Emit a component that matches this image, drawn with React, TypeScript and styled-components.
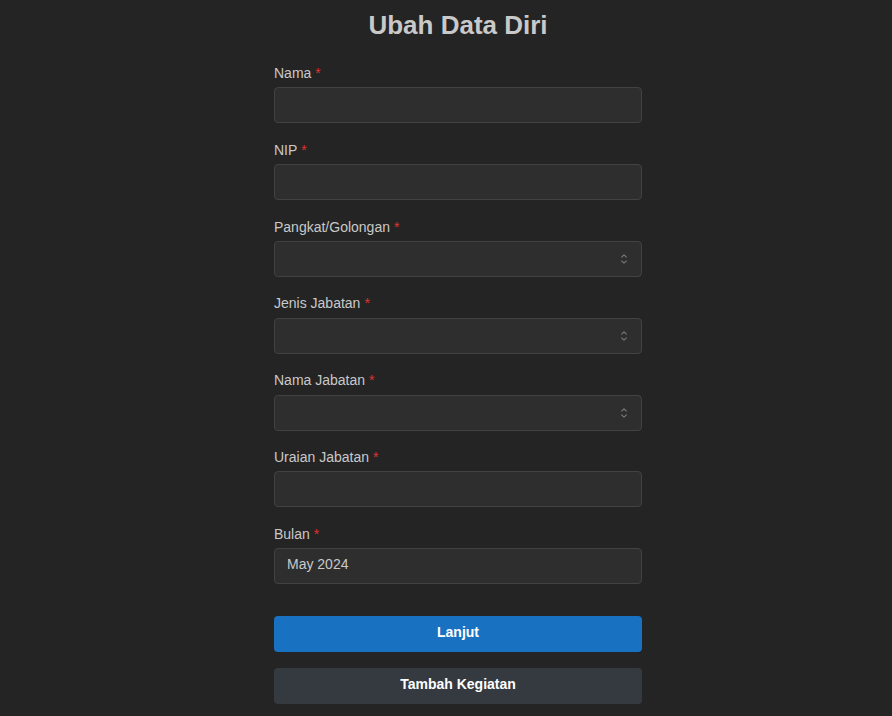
import React from "react";
import styled, { createGlobalStyle } from "styled-components";

const Global = createGlobalStyle`
  html, body { margin: 0; padding: 0; background: #242424; }
  body { font-family: "Liberation Sans", Arial, sans-serif; color: #c9c9c9; }
  * { box-sizing: border-box; }
`;

const Page = styled.div`
  display: flex;
  justify-content: center;
  padding: 8px 0 0 24px;
  min-height: 716px;
`;

const Form = styled.form`
  width: 368px;
  display: flex;
  flex-direction: column;
`;

const Title = styled.h2`
  margin: 0 0 20px;
  font-size: 26px;
  line-height: 35px;
  font-weight: 700;
  text-align: center;
  color: #c9c9c9;
`;

const Fields = styled.div`
  display: flex;
  flex-direction: column;
  gap: 16.4px;
`;

const Field = styled.div`
  display: flex;
  flex-direction: column;
`;

const Label = styled.label`
  font-size: 14px;
  line-height: 21.7px;
  font-weight: 400;
  color: #c9c9c9;
  margin-bottom: 2.7px;
`;

const Required = styled.span`
  color: #e03131;
  margin-left: 4px;
`;

const InputBox = styled.div`
  position: relative;
  height: 36px;
  border: 1px solid #424242;
  border-radius: 4px;
  background: #2e2e2e;
  display: flex;
  align-items: center;
  padding: 0 12px 4px;
  font-size: 14px;
  color: #c9c9c9;
`;

const Chevron = styled.svg`
  position: absolute;
  right: 9px;
  top: 50%;
  transform: translateY(-50%);
  width: 16px;
  height: 16px;
  color: #828282;
`;

const Buttons = styled.div`
  display: flex;
  flex-direction: column;
  gap: 16px;
  margin-top: 32px;
`;

const Button = styled.button<{ $variant: "primary" | "gray" }>`
  height: 36px;
  border: none;
  border-radius: 4px;
  padding: 0 0 4px;
  background: ${(p) => (p.$variant === "primary" ? "#1971c2" : "#343a40")};
  color: #ffffff;
  font-family: "Liberation Sans", Arial, sans-serif;
  font-size: 14px;
  font-weight: 700;
  cursor: pointer;
`;

const SelectIcon = () => (
  <Chevron viewBox="0 0 15 15" fill="none">
    <path
      d="M4.93179 5.43179C4.75605 5.60753 4.75605 5.89245 4.93179 6.06819C5.10753 6.24392 5.39245 6.24392 5.56819 6.06819L7.49999 4.13638L9.43179 6.06819C9.60753 6.24392 9.89245 6.24392 10.0682 6.06819C10.2439 5.89245 10.2439 5.60753 10.0682 5.43179L7.81819 3.18179C7.73379 3.0974 7.61933 3.04999 7.49999 3.04999C7.38064 3.04999 7.26618 3.0974 7.18179 3.18179L4.93179 5.43179ZM10.0682 9.56819C10.2439 9.39245 10.2439 9.10753 10.0682 8.93179C9.89245 8.75606 9.60753 8.75606 9.43179 8.93179L7.49999 10.8636L5.56819 8.93179C5.39245 8.75606 5.10753 8.75606 4.93179 8.93179C4.75605 9.10753 4.75605 9.39245 4.93179 9.56819L7.18179 11.8182C7.35753 11.9939 7.64245 11.9939 7.81819 11.8182L10.0682 9.56819Z"
      fill="currentColor"
      fillRule="evenodd"
      clipRule="evenodd"
    />
  </Chevron>
);

type F = { label: string; select?: boolean; value?: string };

const fields: F[] = [
  { label: "Nama" },
  { label: "NIP" },
  { label: "Pangkat/Golongan", select: true },
  { label: "Jenis Jabatan", select: true },
  { label: "Nama Jabatan", select: true },
  { label: "Uraian Jabatan" },
  { label: "Bulan", value: "May 2024" },
];

export default function App() {
  return (
    <>
      <Global />
      <Page>
        <Form onSubmit={(e) => e.preventDefault()}>
          <Title>Ubah Data Diri</Title>
          <Fields>
            {fields.map((f) => (
              <Field key={f.label}>
                <Label>
                  {f.label}
                  <Required>*</Required>
                </Label>
                <InputBox>
                  {f.value}
                  {f.select && <SelectIcon />}
                </InputBox>
              </Field>
            ))}
          </Fields>
          <Buttons>
            <Button type="button" $variant="primary">Lanjut</Button>
            <Button type="button" $variant="gray">Tambah Kegiatan</Button>
          </Buttons>
        </Form>
      </Page>
    </>
  );
}
